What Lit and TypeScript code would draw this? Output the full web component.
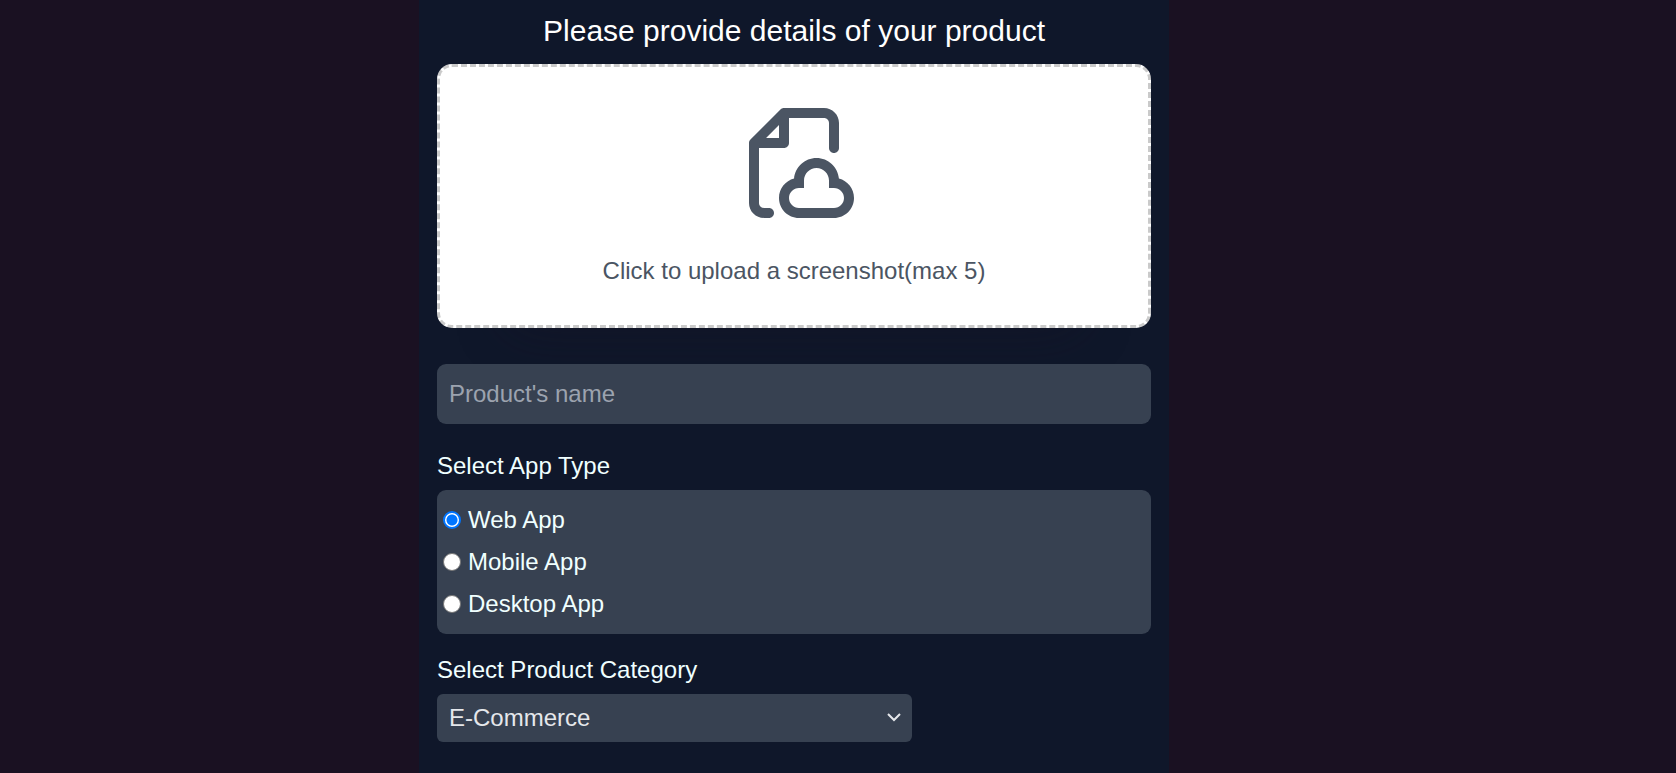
import { LitElement, html, css } from "lit";
import { customElement, state } from "lit/decorators.js";

const APP_TYPES = ["Web App", "Mobile App", "Desktop App"];
const CATEGORIES = ["E-Commerce", "Education", "Finance", "Social", "Other"];

@customElement("app-root")
export class AppRoot extends LitElement {
  @state() private appType = APP_TYPES[0];

  static styles = css`
    :host {
      display: block;
      min-height: 100vh;
      background: #1a1122;
      color: azure;
      font: 24px/36px "Liberation Sans", Arial, sans-serif;
    }
    * {
      box-sizing: border-box;
    }
    .panel {
      display: flex;
      flex-direction: column;
      max-width: 750px;
      min-height: 100vh;
      margin-left: 25%;
      padding: 10px 18px 30px;
      background: #0f172a;
    }
    .title {
      margin: 0 0 12px;
      font-size: 30px;
      line-height: 42px;
      font-weight: 400;
      text-align: center;
      color: #fff;
    }
    .upload {
      display: flex;
      flex-direction: column;
      align-items: center;
      gap: 30px;
      padding: 36px;
      border: 3px dashed #cacaca;
      border-radius: 15px;
      background: #fff;
      box-shadow: 0 72px 52px -72px rgba(26, 17, 34, 0.4);
      color: #4b5563;
      cursor: pointer;
    }
    .upload-icon {
      display: block;
      height: 120px;
      fill: #4b5563;
    }
    .name {
      width: 100%;
      height: 60px;
      margin: 36px 0 24px;
      padding: 12px;
      border: 0;
      border-radius: 9px;
      background: #374151;
      color: #e5e7eb;
      font: inherit;
    }
    .name::placeholder {
      color: #9ca3af;
      opacity: 1;
    }
    .options {
      display: flex;
      flex-direction: column;
      gap: 6px;
      margin: 6px 0 18px;
      padding: 12px 6px;
      border-radius: 9px;
      background: #374151;
    }
    .option {
      display: flex;
      align-items: center;
      gap: 7px;
    }
    .radio {
      appearance: none;
      width: 18px;
      height: 18px;
      margin: 0;
      border: 1px solid #767676;
      border-radius: 50%;
      background: #fff;
    }
    .radio:checked {
      border: 2px solid #0075ff;
      background: radial-gradient(circle, #0075ff 5px, #fff 6px);
    }
    .select-wrap {
      display: grid;
      align-items: center;
      width: 66.5%;
      margin-top: 6px;
    }
    .select {
      grid-area: 1 / 1;
      appearance: none;
      width: 100%;
      height: 48px;
      padding: 0 36px 0 12px;
      border: 0;
      border-radius: 6px;
      background: #374151;
      color: #e5e7eb;
      font: inherit;
    }
    .chevron {
      grid-area: 1 / 1;
      justify-self: end;
      width: 14px;
      height: 10px;
      margin-right: 11px;
      fill: none;
      stroke: #e5e7eb;
      stroke-width: 2;
      pointer-events: none;
    }
    .hidden-file {
      display: none;
    }
  `;

  render() {
    return html`
      <form class="panel">
        <h1 class="title">Please provide details of your product</h1>
        <label class="upload" for="shots">
          <svg class="upload-icon" viewBox="0 0 24 24" aria-hidden="true">
            <path fill-rule="evenodd" clip-rule="evenodd" d="M10 1C9.73478 1 9.48043 1.10536 9.29289 1.29289L3.29289 7.29289C3.10536 7.48043 3 7.73478 3 8V20C3 21.6569 4.34315 23 6 23H7C7.55228 23 8 22.5523 8 22C8 21.4477 7.55228 21 7 21H6C5.44772 21 5 20.5523 5 20V9H10C10.5523 9 11 8.55228 11 8V3H18C18.5523 3 19 3.44772 19 4V9C19 9.55228 19.4477 10 20 10C20.5523 10 21 9.55228 21 9V4C21 2.34315 19.6569 1 18 1H10ZM9 7H6.41421L9 4.41421V7ZM14 15.5C14 14.1193 15.1193 13 16.5 13C17.8807 13 19 14.1193 19 15.5V16V17H20C21.1046 17 22 17.8954 22 19C22 20.1046 21.1046 21 20 21H13C11.8954 21 11 20.1046 11 19C11 17.8954 11.8954 17 13 17H14V16V15.5ZM16.5 11C14.142 11 12.2076 12.8136 12.0156 15.122C10.2825 15.5606 9 17.1305 9 19C9 21.2091 10.7909 23 13 23H20C22.2091 23 24 21.2091 24 19C24 17.1305 22.7175 15.5606 20.9844 15.122C20.7924 12.8136 18.858 11 16.5 11Z"></path>
          </svg>
          <span>Click to upload a screenshot(max 5)</span>
          <input class="hidden-file" id="shots" type="file" accept="image/*" multiple />
        </label>
        <input class="name" type="text" placeholder="Product's name" aria-label="Product's name" />
        <span id="type-label">Select App Type</span>
        <div class="options" role="radiogroup" aria-labelledby="type-label">
          ${APP_TYPES.map(
            (type) => html`
              <label class="option">
                <input
                  class="radio"
                  type="radio"
                  name="app-type"
                  .value=${type}
                  .checked=${this.appType === type}
                  @change=${() => (this.appType = type)}
                />
                ${type}
              </label>
            `
          )}
        </div>
        <label for="category">Select Product Category</label>
        <div class="select-wrap">
          <select class="select" id="category">
            ${CATEGORIES.map((name) => html`<option>${name}</option>`)}
          </select>
          <svg class="chevron" viewBox="0 0 14 10" aria-hidden="true">
            <path d="M1 1L7 7L13 1"></path>
          </svg>
        </div>
      </form>
    `;
  }
}
